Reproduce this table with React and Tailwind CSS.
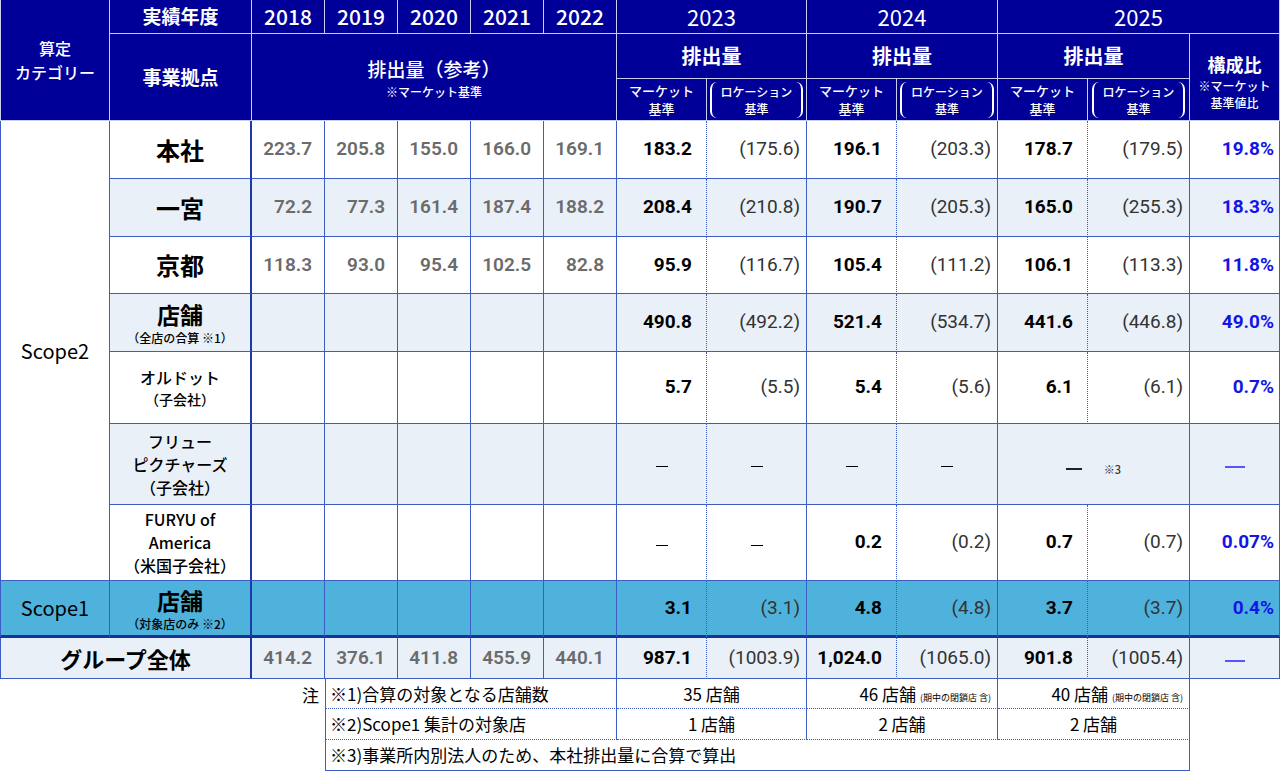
import React from "react";

const HB = "border-r border-b border-[#c9cdf0]";
const CB = "border-r border-b border-[#3d5cc4]";
const NAME = "border-r-2 border-b border-r-[#1c3aa8] border-b-[#3d5cc4] text-center";
const OLD = `${CB} text-right pr-[12px] text-[#6b6b6b] font-semibold text-[19px] font-['Roboto','Noto_Sans_CJK_JP',sans-serif]`;
const MKT = `${CB} [border-right-style:dotted] text-right pr-[14px] font-bold text-[19px] font-['Roboto','Noto_Sans_CJK_JP',sans-serif]`;
const LOC = `${CB} text-right pr-[6px] text-[#333] font-normal text-[19px] font-['Roboto','Noto_Sans_CJK_JP',sans-serif]`;
const PCT = `${CB} text-right pr-[5px] text-[#1414e6] font-bold text-[19px] font-['Roboto','Noto_Sans_CJK_JP',sans-serif]`;
const DASH = `${CB} text-center`;
const FT = "border-r border-b border-[#3d5cc4] [border-bottom-style:dotted]";

function Dash() {
  return <span className="inline-block w-[12px] h-px bg-black align-middle"></span>;
}

function BlueDash() {
  return <span className="inline-block w-[20px] h-[2px] bg-[#5555ff] align-middle"></span>;
}

function Loc({ v }) {
  return <td className={LOC}>({v})</td>;
}

function MarketHead() {
  return (
    <th className={`${HB} font-medium text-[13px] leading-[18px] text-white`}>
      <div>マーケット</div>
      <div>基準</div>
    </th>
  );
}

function LocHead() {
  return (
    <th className={`${HB} text-white`}>
      <div className="flex items-center justify-center gap-[2px]">
        <span className="w-[7px] h-[36px] rounded-l-[10px] border-l-2 border-white"></span>
        <div className="font-medium text-[12px] leading-[17px] px-[2px]">
          <div>ロケーション</div>
          <div>基準</div>
        </div>
        <span className="w-[7px] h-[36px] rounded-r-[10px] border-r-2 border-white"></span>
      </div>
    </th>
  );
}

function OldCells({ vals }) {
  return vals.map((v, i) => (
    <td key={i} className={OLD}>
      {v}
    </td>
  ));
}

function EmptyOld() {
  return [0, 1, 2, 3, 4].map((i) => <td key={i} className={CB}></td>);
}

export default function App() {
  return (
    <div className="w-[1280px] h-[772px] bg-white font-['Noto_Sans_CJK_JP',sans-serif] text-black overflow-hidden">
      <table className="border-separate border-spacing-0 table-fixed w-[1280px]">
        <colgroup>
          <col className="w-[110px]" />
          <col className="w-[142px]" />
          <col className="w-[73px]" />
          <col className="w-[73px]" />
          <col className="w-[73px]" />
          <col className="w-[73px]" />
          <col className="w-[73px]" />
          <col className="w-[90px]" />
          <col className="w-[100px]" />
          <col className="w-[90px]" />
          <col className="w-[101px]" />
          <col className="w-[90px]" />
          <col className="w-[102px]" />
          <col className="w-[90px]" />
        </colgroup>
        <thead className="bg-[#000099] text-white">
          <tr className="h-[33px]">
            <th rowSpan={3} className={`${HB} border-l text-[16px] font-medium leading-[24px]`}>
              <div>算定</div>
              <div>カテゴリー</div>
            </th>
            <th className={`${HB} text-[19px] font-bold`}>実績年度</th>
            {["2018", "2019", "2020", "2021", "2022"].map((y) => (
              <th key={y} className={`${HB} text-[21px] font-medium`}>
                {y}
              </th>
            ))}
            <th colSpan={2} className={`${HB} text-[22px] font-normal`}>2023</th>
            <th colSpan={2} className={`${HB} text-[22px] font-normal`}>2024</th>
            <th colSpan={3} className={`${HB} text-[22px] font-normal`}>2025</th>
          </tr>
          <tr className="h-[45px]">
            <th rowSpan={2} className={`${HB} text-[19px] font-bold`}>事業拠点</th>
            <th rowSpan={2} colSpan={5} className={`${HB}`}>
              <div className="text-[19px] font-medium leading-[28px]">排出量（参考）</div>
              <div className="text-[12px] font-medium leading-[17px]">※マーケット基準</div>
            </th>
            <th colSpan={2} className={`${HB} text-[20px] font-bold`}>排出量</th>
            <th colSpan={2} className={`${HB} text-[20px] font-bold`}>排出量</th>
            <th colSpan={2} className={`${HB} text-[20px] font-bold`}>排出量</th>
            <th rowSpan={2} className={`${HB}`}>
              <div className="text-[18px] font-bold leading-[26px] pt-[8px]">構成比</div>
              <div className="text-[12px] font-medium leading-[17px]">※マーケット</div>
              <div className="text-[12px] font-medium leading-[17px]">基準値比</div>
            </th>
          </tr>
          <tr className="h-[42px]">
            <MarketHead />
            <LocHead />
            <MarketHead />
            <LocHead />
            <MarketHead />
            <LocHead />
          </tr>
        </thead>
        <tbody>
          <tr className="h-[58px]">
            <td rowSpan={7} className={`${CB} border-l text-center text-[20px] font-normal bg-white`}>Scope2</td>
            <td className={`${NAME} text-[24px] font-bold`}>本社</td>
            <OldCells vals={["223.7", "205.8", "155.0", "166.0", "169.1"]} />
            <td className={MKT}>183.2</td>
            <Loc v="175.6" />
            <td className={MKT}>196.1</td>
            <Loc v="203.3" />
            <td className={MKT}>178.7</td>
            <Loc v="179.5" />
            <td className={PCT}>19.8%</td>
          </tr>
          <tr className="h-[58px] bg-[#eaf0f8]">
            <td className={`${NAME} text-[24px] font-bold`}>一宮</td>
            <OldCells vals={["72.2", "77.3", "161.4", "187.4", "188.2"]} />
            <td className={MKT}>208.4</td>
            <Loc v="210.8" />
            <td className={MKT}>190.7</td>
            <Loc v="205.3" />
            <td className={MKT}>165.0</td>
            <Loc v="255.3" />
            <td className={PCT}>18.3%</td>
          </tr>
          <tr className="h-[57px]">
            <td className={`${NAME} text-[24px] font-bold`}>京都</td>
            <OldCells vals={["118.3", "93.0", "95.4", "102.5", "82.8"]} />
            <td className={MKT}>95.9</td>
            <Loc v="116.7" />
            <td className={MKT}>105.4</td>
            <Loc v="111.2" />
            <td className={MKT}>106.1</td>
            <Loc v="113.3" />
            <td className={PCT}>11.8%</td>
          </tr>
          <tr className="h-[58px] bg-[#eaf0f8]">
            <td className={`${NAME}`}>
              <div className="text-[23px] font-bold leading-[30px]">店舗</div>
              <div className="text-[12px] font-medium leading-[17px]">（全店の合算 ※1）</div>
            </td>
            <EmptyOld />
            <td className={MKT}>490.8</td>
            <Loc v="492.2" />
            <td className={MKT}>521.4</td>
            <Loc v="534.7" />
            <td className={MKT}>441.6</td>
            <Loc v="446.8" />
            <td className={PCT}>49.0%</td>
          </tr>
          <tr className="h-[72px]">
            <td className={`${NAME}`}>
              <div className="text-[16px] font-medium leading-[23px]">オルドット</div>
              <div className="text-[14px] font-medium leading-[21px]">（子会社）</div>
            </td>
            <EmptyOld />
            <td className={MKT}>5.7</td>
            <Loc v="5.5" />
            <td className={MKT}>5.4</td>
            <Loc v="5.6" />
            <td className={MKT}>6.1</td>
            <Loc v="6.1" />
            <td className={PCT}>0.7%</td>
          </tr>
          <tr className="h-[81px] bg-[#eaf0f8]">
            <td className={`${NAME} text-[16px] font-medium leading-[23px]`}>
              <div>フリュー</div>
              <div>ピクチャーズ</div>
              <div>（子会社）</div>
            </td>
            <EmptyOld />
            <td className={`${DASH} [border-right-style:dotted]`}><Dash /></td>
            <td className={DASH}><Dash /></td>
            <td className={`${DASH} [border-right-style:dotted]`}><Dash /></td>
            <td className={DASH}><Dash /></td>
            <td colSpan={2} className={`${CB} text-center`}>
              <span className="inline-flex items-center">
                <span className="inline-block w-[16px] h-[1.5px] bg-[#222]"></span>
                <span className="ml-[22px] text-[11px] font-medium text-[#333]">※3</span>
              </span>
            </td>
            <td className={`${CB} text-center`}>
              <BlueDash />
            </td>
          </tr>
          <tr className="h-[76px]">
            <td className={`${NAME} text-[16px] font-medium leading-[23px]`}>
              <div>FURYU of</div>
              <div>America</div>
              <div>（米国子会社）</div>
            </td>
            <EmptyOld />
            <td className={`${DASH} [border-right-style:dotted]`}><Dash /></td>
            <td className={DASH}><Dash /></td>
            <td className={MKT}>0.2</td>
            <Loc v="0.2" />
            <td className={MKT}>0.7</td>
            <Loc v="0.7" />
            <td className={PCT}>0.07%</td>
          </tr>
          <tr className="h-[57px] bg-[#4fb2dc]">
            <td className="border-r border-l border-b-[3px] border-[#3d5cc4] border-b-[#17339a] text-center text-[20px] font-normal">
              Scope1
            </td>
            <td className="border-r-2 border-b-[3px] border-r-[#1c3aa8] border-b-[#17339a] text-center">
              <div className="text-[23px] font-bold leading-[30px]">店舗</div>
              <div className="text-[12px] font-medium leading-[17px]">（対象店のみ ※2）</div>
            </td>
            {[0, 1, 2, 3, 4].map((i) => (
              <td key={i} className="border-r border-b-[3px] border-[#3d5cc4] border-b-[#17339a]"></td>
            ))}
            <td className={`${MKT} border-b-[3px] border-b-[#17339a]`}>3.1</td>
            <td className={`${LOC} border-b-[3px] border-b-[#17339a]`}>(3.1)</td>
            <td className={`${MKT} border-b-[3px] border-b-[#17339a]`}>4.8</td>
            <td className={`${LOC} border-b-[3px] border-b-[#17339a]`}>(4.8)</td>
            <td className={`${MKT} border-b-[3px] border-b-[#17339a]`}>3.7</td>
            <td className={`${LOC} border-b-[3px] border-b-[#17339a]`}>(3.7)</td>
            <td className={`${PCT} border-b-[3px] border-b-[#17339a]`}>0.4%</td>
          </tr>
          <tr className="h-[41px] bg-[#eaf0f8]">
            <td colSpan={2} className="border-l border-r-2 border-b border-[#3d5cc4] border-r-[#1c3aa8] text-center text-[22px] font-bold">
              グループ全体
            </td>
            <OldCells vals={["414.2", "376.1", "411.8", "455.9", "440.1"]} />
            <td className={MKT}>987.1</td>
            <Loc v="1003.9" />
            <td className={MKT}>1,024.0</td>
            <Loc v="1065.0" />
            <td className={MKT}>901.8</td>
            <Loc v="1005.4" />
            <td className={`${CB} text-center`}>
              <BlueDash />
            </td>
          </tr>
        </tbody>
      </table>

      <div className="flex">
        <div className="w-[325px] flex justify-end pr-[6px] pt-[3px] text-[17px] font-normal">注</div>
        <table className="border-separate border-spacing-0 table-fixed w-[865px] text-[17px] font-normal">
          <colgroup>
            <col className="w-[292px]" />
            <col className="w-[190px]" />
            <col className="w-[191px]" />
            <col className="w-[192px]" />
          </colgroup>
          <tbody>
            <tr className="h-[30px]">
              <td className={`${FT} border-l pl-[4px]`}>※1)合算の対象となる店舗数</td>
              <td className={`${FT} text-center`}>35 店舗</td>
              <td className={`${FT} text-right pr-[6px]`}>
                46 店舗 <span className="text-[9px]">(期中の閉鎖店 含)</span>
              </td>
              <td className={`${FT} text-right pr-[6px]`}>
                40 店舗 <span className="text-[9px]">(期中の閉鎖店 含)</span>
              </td>
            </tr>
            <tr className="h-[31px]">
              <td className={`${FT} border-l pl-[4px]`}>※2)Scope1 集計の対象店</td>
              <td className={`${FT} text-center`}>1 店舗</td>
              <td className={`${FT} text-center`}>2 店舗</td>
              <td className={`${FT} text-center`}>2 店舗</td>
            </tr>
            <tr className="h-[31px]">
              <td colSpan={4} className="border-l border-r border-b border-[#3d5cc4] pl-[4px]">
                ※3)事業所内別法人のため、本社排出量に合算で算出
              </td>
            </tr>
          </tbody>
        </table>
      </div>
    </div>
  );
}
